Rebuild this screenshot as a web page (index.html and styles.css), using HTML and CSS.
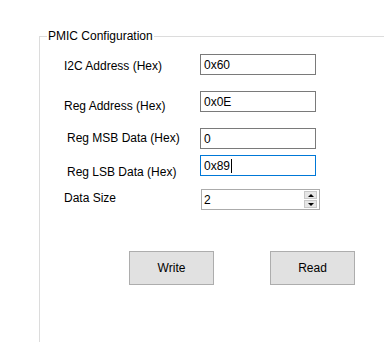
FILE: index.html
```html
<!DOCTYPE html>
<html lang="en">
<head>
  <meta charset="UTF-8">
  <title>PMIC Configuration</title>
  <link rel="stylesheet" href="styles.css">
</head>
<body>
  <fieldset class="group">
    <legend class="group-title">PMIC Configuration</legend>
    <div class="row row-i2c">
      <span class="label">I2C Address (Hex)</span>
      <div class="field"><span class="field-text">0x60</span></div>
    </div>
    <div class="row row-reg">
      <span class="label">Reg Address (Hex)</span>
      <div class="field"><span class="field-text">0x0E</span></div>
    </div>
    <div class="row row-msb">
      <span class="label label-indent">Reg MSB Data (Hex)</span>
      <div class="field"><span class="field-text">0</span></div>
    </div>
    <div class="row row-lsb">
      <span class="label label-indent">Reg LSB Data (Hex)</span>
      <div class="field focused"><span class="field-text">0x89</span><span class="caret"></span></div>
    </div>
    <div class="row row-size">
      <span class="label">Data Size</span>
      <div class="spin">
        <span class="field-text">2</span>
        <div class="spin-btns">
          <span class="spin-btn"><span class="arrow-up"></span></span>
          <span class="spin-btn"><span class="arrow-down"></span></span>
        </div>
      </div>
    </div>
    <div class="actions">
      <button class="btn" type="button">Write</button>
      <button class="btn" type="button">Read</button>
    </div>
  </fieldset>
</body>
</html>
```

FILE: styles.css
```css
html, body {
  margin: 0;
  padding: 0;
  background: #fff;
  color: #000;
  font-family: 'Liberation Sans', Arial, sans-serif;
  font-size: 12px;
  overflow: hidden;
  height: 100%;
}
.group {
  margin: 29px 0 0 39px;
  padding: 0;
  border: none;
  border-top: 1px solid #dcdcdc;
  border-left: 1px solid #dcdcdc;
  min-height: 330px;
  box-sizing: border-box;
  min-width: 0;
}
.group-title {
  margin-left: 7px;
  padding: 0 1px;
  line-height: 14px;
  height: 14px;
}
.row {
  display: flex;
  align-items: flex-start;
  height: 21px;
  padding-left: 24px;
  line-height: 14px;
}
.label {
  width: 136px;
  flex: none;
}
.label-indent {
  padding-left: 3px;
  width: 133px;
}
.row-i2c { margin-top: 11px; }
.row-i2c .label { margin-top: 5px; }
.row-reg { margin-top: 16px; }
.row-reg .label { margin-top: 8px; }
.row-msb { margin-top: 16px; }
.row-msb .label { margin-top: 3px; }
.row-lsb { margin-top: 6px; }
.row-lsb .label { margin-top: 10px; }
.row-size { margin-top: 13px; }
.row-size .label { margin-top: 2px; }
.field {
  width: 116px;
  height: 21px;
  border: 1px solid #7a7a7a;
  box-sizing: border-box;
  display: flex;
  align-items: center;
  padding-left: 3px;
}
.field.focused {
  border-color: #0078d7;
}
.caret {
  width: 1px;
  height: 14px;
  background: #000;
  margin-left: 1px;
}
.spin {
  width: 119px;
  height: 21px;
  margin-left: 1px;
  border: 1px solid #ababab;
  box-sizing: border-box;
  display: flex;
  align-items: center;
  padding-left: 2px;
}
.spin .field-text {
  flex: 1;
}
.spin-btns {
  display: flex;
  flex-direction: column;
  width: 13px;
  margin-right: 2px;
  gap: 1px;
}
.spin-btn {
  height: 8px;
  background: #e6e6e6;
  border: 1px solid #c8c8c8;
  box-sizing: border-box;
  display: flex;
  align-items: center;
  justify-content: center;
}
.arrow-up {
  width: 0;
  height: 0;
  border-left: 3px solid transparent;
  border-right: 3px solid transparent;
  border-bottom: 3px solid #000;
}
.arrow-down {
  width: 0;
  height: 0;
  border-left: 3px solid transparent;
  border-right: 3px solid transparent;
  border-top: 3px solid #000;
}
.actions {
  display: flex;
  gap: 56px;
  padding-left: 89px;
  margin-top: 41px;
}
.btn {
  width: 85px;
  height: 34px;
  background: #e1e1e1;
  border: 1px solid #adadad;
  font-family: 'Liberation Sans', Arial, sans-serif;
  font-size: 12px;
  color: #000;
  padding: 0;
}
```
